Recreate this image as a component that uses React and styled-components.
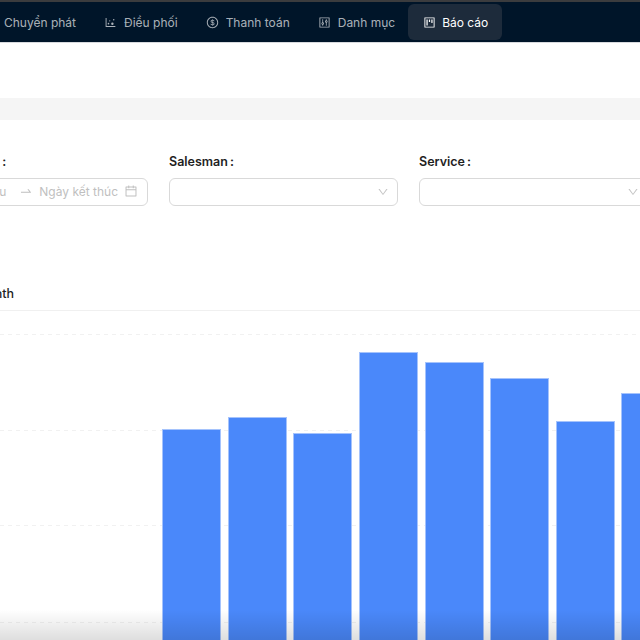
import React from "react";
import styled, { createGlobalStyle } from "styled-components";
import {
  AiOutlineDotChart,
  AiOutlineDollar,
  AiOutlineControl,
  AiOutlineProject,
  AiOutlineCalendar,
  AiOutlineDown,
  AiOutlineSwapRight,
} from "react-icons/ai";

const GlobalStyle = createGlobalStyle`
  html, body {
    margin: 0;
    background: #fff;
    overflow: hidden;
  }
  body {
    font-family: Inter, "Liberation Sans", sans-serif;
    -webkit-font-smoothing: antialiased;
  }
`;

const Page = styled.div`
  position: relative;
  width: 640px;
  height: 640px;
  overflow: hidden;
  background: #fff;
`;

const Nav = styled.nav`
  display: flex;
  align-items: center;
  height: 40px;
  padding-left: 4px;
  background: #001529;
  border-top: 2px solid #3b3c3e;
  border-bottom: 1px solid #d8dade;
`;

const NavItem = styled.div`
  display: flex;
  align-items: center;
  gap: ${(p) => (p.$active ? 6 : 7)}px;
  height: 36px;
  margin-right: ${(p) => p.$gap}px;
  padding: ${(p) => (p.$active ? "0 14px 0 15px" : "0")};
  border-radius: 6px;
  font-size: 12px;
  white-space: nowrap;
  color: ${(p) => (p.$active ? "#fff" : "rgba(255, 255, 255, 0.68)")};
  background: ${(p) => (p.$active ? "#1d2b3b" : "transparent")};

  svg {
    font-size: 13px;
  }
`;

const Band = styled.div`
  height: 22px;
  margin-top: 55px;
  background: #f5f5f5;
`;

const Filters = styled.div`
  display: grid;
  grid-template-columns: repeat(3, 229px);
  column-gap: 21px;
  margin: 33px 0 0 -81px;
`;

const Field = styled.div`
  display: flex;
  flex-direction: column;
  gap: 8px;
`;

const Label = styled.label`
  font-size: 12.5px;
  line-height: 17px;
  font-weight: 600;
  color: #1f1f1f;
  white-space: nowrap;
`;

const Colon = styled.span`
  margin-left: ${(p) => p.$gap || 2}px;
`;

const Control = styled.div`
  box-sizing: border-box;
  display: flex;
  align-items: center;
  justify-content: flex-end;
  height: 28px;
  padding: 0 8px 0 10px;
  border: 1px solid #d9d9d9;
  border-radius: 6px;
  color: #c4c4c4;
  font-size: 12px;
`;

const DateControl = styled(Control)`
  gap: 6px;
  padding: 0 9px 2px 10px;
  color: #bfbfbf;

  svg {
    font-size: 14px;
    flex: none;
  }
`;

const DateText = styled.span`
  white-space: nowrap;
  margin-right: ${(p) => p.$after || 0}px;
`;

const ChartCard = styled.section`
  margin-top: 78px;
`;

const ChartTitle = styled.div`
  height: 25px;
  padding-top: 1px;
  margin-left: -97px;
  width: 760px;
  font-size: 12.5px;
  line-height: 18px;
  font-weight: 500;
  color: #1f1f1f;
  white-space: nowrap;
  border-bottom: 1px solid #f0f0f0;
`;

const ChartSvg = styled.svg`
  display: block;
  width: 640px;
  height: 329px;
`;

const BottomShade = styled.div`
  position: absolute;
  left: 0;
  right: 0;
  bottom: 0;
  height: 30px;
  pointer-events: none;
  background: linear-gradient(to bottom, rgba(0, 0, 0, 0), rgba(0, 0, 0, 0.13));
`;

const menu = [
  { label: "Chuyển phát", gap: 28 },
  { label: "Điều phối", icon: <AiOutlineDotChart />, gap: 28 },
  { label: "Thanh toán", icon: <AiOutlineDollar />, gap: 28 },
  { label: "Danh mục", icon: <AiOutlineControl />, gap: 13 },
  { label: "Báo cáo", icon: <AiOutlineProject />, gap: 0, active: true },
];

const bars = [
  { x: 162, top: 429 },
  { x: 228, top: 417 },
  { x: 293, top: 433 },
  { x: 359, top: 352 },
  { x: 425, top: 362 },
  { x: 490, top: 378 },
  { x: 556, top: 421 },
  { x: 621, top: 393 },
];

const gridLines = [334, 430, 525, 622];
const chartTop = 311;

function Chart() {
  return (
    <ChartSvg viewBox="0 0 640 329">
      {gridLines.map((y) => (
        <line
          key={y}
          x1="0"
          x2="640"
          y1={y - chartTop + 0.5}
          y2={y - chartTop + 0.5}
          stroke="#f1f1f1"
          strokeDasharray="4 4"
        />
      ))}
      {bars.map((b) => (
        <rect
          key={b.x}
          x={b.x + 0.5}
          y={b.top - chartTop + 0.5}
          width="58"
          height={640 - b.top + 2}
          fill="#4a88fa"
          stroke="#a5c3fc"
        />
      ))}
    </ChartSvg>
  );
}

export default function App() {
  return (
    <Page>
      <GlobalStyle />
      <Nav>
        {menu.map((item) => (
          <NavItem key={item.label} $gap={item.gap} $active={item.active}>
            {item.icon}
            <span>{item.label}</span>
          </NavItem>
        ))}
      </Nav>
      <Band />
      <Filters>
        <Field>
          <Label>Thời gian tạo<Colon $gap={5}>:</Colon></Label>
          <DateControl>
            <DateText $after={7}>Ngày bắt đầu</DateText>
            <AiOutlineSwapRight />
            <DateText>Ngày kết thúc</DateText>
            <AiOutlineCalendar />
          </DateControl>
        </Field>
        <Field>
          <Label>Salesman<Colon>:</Colon></Label>
          <Control>
            <AiOutlineDown />
          </Control>
        </Field>
        <Field>
          <Label>Service<Colon>:</Colon></Label>
          <Control>
            <AiOutlineDown />
          </Control>
        </Field>
      </Filters>
      <ChartCard>
        <ChartTitle>Revenue by month</ChartTitle>
        <Chart />
      </ChartCard>
      <BottomShade />
    </Page>
  );
}
